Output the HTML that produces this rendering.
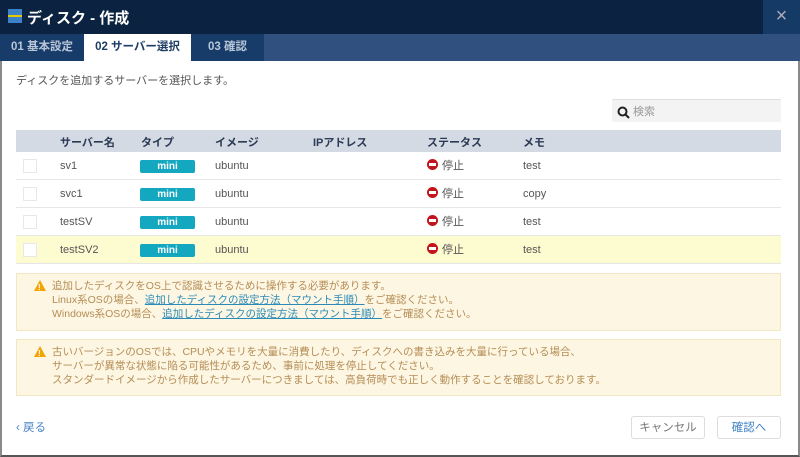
<!DOCTYPE html>
<html><head><meta charset="utf-8"><style>
*{margin:0;padding:0;box-sizing:border-box}
body{width:800px;height:457px;overflow:hidden;background:#fff;font-family:"Liberation Sans","Noto Sans CJK JP",sans-serif;font-size:11px;color:#444;position:relative}
.abs{position:absolute}
.title{left:0;top:0;width:800px;height:34px;background:#0b2341;color:#fff;font-size:15px;font-weight:bold}
.tabs{left:0;top:34px;width:800px;height:27px;background:#30507f}
.tab{position:absolute;top:0;height:27px;line-height:27px;font-size:11.5px;font-weight:bold;text-align:center}
.frame{left:0;top:61px;width:800px;height:396px;border-left:2px solid #8a8a8a;border-right:2px solid #8a8a8a;border-bottom:2px solid #555}
.row{position:absolute;left:16px;width:765px;height:28px;border-bottom:1px solid #e6e6e6}
.row span{position:absolute;top:6px;line-height:16px;color:#555}
.cb{position:absolute;left:7px;top:7px;width:14px;height:14px;border:1px solid #e8e8e8;background:#fff}
.row .mini{left:124px;top:8px;width:55px;height:13px;background:#13a8bf;border-radius:2px;color:#fff;font-weight:bold;text-align:center;line-height:13px;font-size:10px}
.row .st{left:411px}
.st i{display:inline-block;width:11px;height:11px;border-radius:50%;background:#c3141b;vertical-align:-1px;margin-right:4px;position:relative}
.st i:after{content:"";position:absolute;left:2px;top:4px;width:7px;height:3px;background:#fff}
.warn{position:absolute;left:16px;width:765px;background:#fdf6e3;border:1px solid #f3e6c2;color:#b58d55;line-height:14px;padding:5px 0 0 35px;font-size:10.5px}
.warn a{color:#2a8bb8;text-decoration:underline}
.tri{position:absolute;left:17px;top:6px;width:0;height:0;border-left:6px solid transparent;border-right:6px solid transparent;border-bottom:11px solid #f0a500}
.tri:after{content:"!";position:absolute;left:-2px;top:1px;color:#fff;font-size:8px;font-weight:bold}
.btn{position:absolute;top:416px;height:23px;border:1px solid #ddd;border-radius:3px;background:#fff;text-align:center;line-height:22px;font-size:11.5px}
</style></head><body>
<div class="abs title">
 <div class="abs" style="left:8px;top:9px;width:14px;height:14px;background:#3b82c9"></div>
 <div class="abs" style="left:8px;top:15px;width:14px;height:2px;background:#e8c800"></div>
 <div class="abs" style="left:27px;top:7px">ディスク - 作成</div>
 <div class="abs" style="left:763px;top:0;width:37px;height:34px;background:#163a66;color:#aab;font-size:20px;font-weight:normal;text-align:center;line-height:33px">×</div>
</div>
<div class="abs tabs">
 <div class="tab" style="left:0;width:84px;background:#173c6a;color:#b9c6d8">01 基本設定</div>
 <div class="tab" style="left:84px;width:107px;background:#fff;color:#1e3d66">02 サーバー選択</div>
 <div class="tab" style="left:191px;width:73px;background:#173c6a;color:#b9c6d8">03 確認</div>
</div>
<div class="abs frame"></div>
<div class="abs" style="left:16px;top:72px;color:#555">ディスクを追加するサーバーを選択します。</div>
<div class="abs" style="left:612px;top:99px;width:169px;height:23px;background:#f3f3f3;border-top:1px solid #ddd;border-radius:2px">
 <svg class="abs" style="left:5px;top:6px" width="13" height="13" viewBox="0 0 13 13"><circle cx="5.5" cy="5.5" r="4" fill="none" stroke="#222" stroke-width="2"/><line x1="8.5" y1="8.5" x2="12" y2="12" stroke="#222" stroke-width="2"/></svg>
 <span class="abs" style="left:21px;top:3px;color:#999">検索</span>
</div>
<div class="abs" style="left:16px;top:130px;width:765px;height:22px;background:#d3dae3;color:#2b3a55;font-weight:bold">
 <span class="abs" style="left:44px;top:4px">サーバー名</span><span class="abs" style="left:125px;top:4px">タイプ</span><span class="abs" style="left:199px;top:4px">イメージ</span><span class="abs" style="left:297px;top:4px">IPアドレス</span><span class="abs" style="left:411px;top:4px">ステータス</span><span class="abs" style="left:507px;top:4px">メモ</span>
</div>
<div class="row" style="top:152px"><div class="cb"></div><span style="left:44px">sv1</span><span class="mini">mini</span><span style="left:199px">ubuntu</span><span class="st"><i></i>停止</span><span style="left:507px">test</span></div>
<div class="row" style="top:180px"><div class="cb"></div><span style="left:44px">svc1</span><span class="mini">mini</span><span style="left:199px">ubuntu</span><span class="st"><i></i>停止</span><span style="left:507px">copy</span></div>
<div class="row" style="top:208px"><div class="cb"></div><span style="left:44px">testSV</span><span class="mini">mini</span><span style="left:199px">ubuntu</span><span class="st"><i></i>停止</span><span style="left:507px">test</span></div>
<div class="row" style="top:236px;background:#fdfbd0"><div class="cb"></div><span style="left:44px">testSV2</span><span class="mini">mini</span><span style="left:199px">ubuntu</span><span class="st"><i></i>停止</span><span style="left:507px">test</span></div>
<div class="warn" style="top:273px;height:58px"><div class="tri"></div>追加したディスクをOS上で認識させるために操作する必要があります。<br>Linux系OSの場合、<a>追加したディスクの設定方法（マウント手順）</a>をご確認ください。<br>Windows系OSの場合、<a>追加したディスクの設定方法（マウント手順）</a>をご確認ください。</div>
<div class="warn" style="top:339px;height:57px"><div class="tri"></div>古いバージョンのOSでは、CPUやメモリを大量に消費したり、ディスクへの書き込みを大量に行っている場合、<br>サーバーが異常な状態に陥る可能性があるため、事前に処理を停止してください。<br>スタンダードイメージから作成したサーバーにつきましては、高負荷時でも正しく動作することを確認しております。</div>
<div class="abs" style="left:16px;top:419px;color:#4a86c8;font-size:11.5px">‹ 戻る</div>
<div class="btn" style="left:631px;width:74px;color:#777">キャンセル</div>
<div class="btn" style="left:717px;width:64px;color:#3f7fc4">確認へ</div>
</body></html>
